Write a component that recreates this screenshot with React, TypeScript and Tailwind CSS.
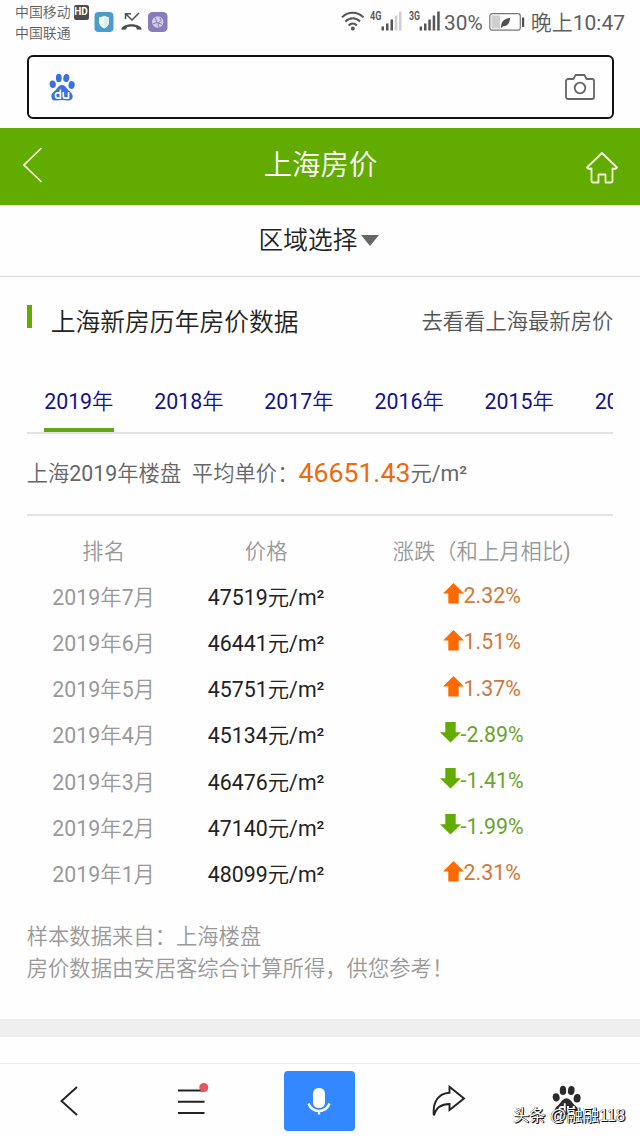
import React from "react";

type Row = { month: string; price: string; change: string; up: boolean };

const rows: Row[] = [
  { month: "2019年7月", price: "47519元/m²", change: "2.32%", up: true },
  { month: "2019年6月", price: "46441元/m²", change: "1.51%", up: true },
  { month: "2019年5月", price: "45751元/m²", change: "1.37%", up: true },
  { month: "2019年4月", price: "45134元/m²", change: "-2.89%", up: false },
  { month: "2019年3月", price: "46476元/m²", change: "-1.41%", up: false },
  { month: "2019年2月", price: "47140元/m²", change: "-1.99%", up: false },
  { month: "2019年1月", price: "48099元/m²", change: "2.31%", up: true },
];

const years = ["2019年", "2018年", "2017年", "2016年", "2015年", "2014年"];

function Paw({ className, cut }: { className: string; cut: string }) {
  return (
    <svg className={className} viewBox="0 0 26 28" fill="currentColor">
      <ellipse cx="3.7" cy="11.2" rx="3.1" ry="3.8" transform="rotate(-12 3.7 11.2)" />
      <ellipse cx="9.8" cy="4.9" rx="2.9" ry="4.2" />
      <ellipse cx="17.3" cy="5" rx="3" ry="4.1" transform="rotate(8 17.3 5)" />
      <ellipse cx="22.6" cy="12" rx="3.1" ry="3.9" transform="rotate(8 22.6 12)" />
      <path d="M13 12c2.6 0 3.8 2 5.400 4 2 2.500 5.300 4.200 5.300 7.500 0 3.200-2.400 4.300-5.200 4-2-.2-3.600-.5-5.500-.5s-3.600.4-5.500.5c-3 .2-5.200-1-5.200-4.100 0-3.200 3.200-4.900 5.200-7.400C9.100 14 10.400 12 13 12z" />
      <g fill="none" stroke={cut} strokeWidth="1.7">
        <path d="M11.400 16.500v9.300M11.400 19.900H8.600c-1.400 0-2.100.9-2.100 2.700s.7 2.600 2.100 2.600h2.800" />
        <path d="M14.300 19v4.200c0 1.400.7 2 2 2h3.200V19" />
      </g>
    </svg>
  );
}

function StatusBar() {
  return (
    <header className="flex h-[55px] items-start text-[#5d5d5d]">
      <div className="ml-[15px] mt-[2px] text-[13.9px] leading-[20.5px]">
        <div className="flex items-center">
          中国移动
          <span className="ml-[3px] flex h-[15px] w-[15px] items-center justify-center rounded-[2px] bg-[#4d4d4d] font-[Roboto] text-[10px] font-bold text-white">
            HD
          </span>
        </div>
        <div>中国联通</div>
      </div>
      <svg className="ml-[5px] mt-[11px] h-[22px] w-[74px]" viewBox="0 0 74 22">
        <rect x="0.500" y="1" width="19" height="20" rx="4" fill="#4b9cc9" />
        <path d="M10 5l5 1.500v4.500c0 3-2 5-5 6.500-3-1.500-5-3.500-5-6.500V6.500z" fill="#f4faf6" />
        <path d="M10 5l5 1.500v4.500c0 3-2 5-5 6.500z" fill="#dceff0" />
        <path d="M31.500 8V2.800h5.500M31.800 3l6.200 6L45 2" fill="none" stroke="#4f4f4f" strokeWidth="1.500" />
        <path d="M27.500 18.800c-.4-1.400.3-2.600 2-3.500 5-2.600 11-2.600 16 0 1.600.9 2.300 2.100 1.900 3.500l-4.500-.2-.9-2.300c-3-1-6-1-9 0l-.9 2.300z" fill="#4f4f4f" />
        <rect x="54" y="1" width="19.500" height="20" rx="4.500" fill="#8a7bbb" />
        <circle cx="63.700" cy="11" r="5.800" fill="#d0cbe6" />
        <path d="M61 6.500l2 5-4.500 1.500M63 11.500l5 2M66 6.500l1 3-3 3 1 4" stroke="#8577b8" strokeWidth="0.900" fill="none" />
      </svg>
      <div className="flex-1" />
      <svg className="mt-[8px] h-[26px] w-[102px]" viewBox="0 0 102 26">
        <g fill="none" stroke="#555" strokeWidth="2">
          <path d="M2 9.400c6-6.200 15.500-6.200 21.500 0M5.400 13.500c4.300-4.300 10.500-4.300 14.700 0M8.600 17.400c2.500-2.300 5.800-2.300 8.300 0" />
        </g>
        <circle cx="12.800" cy="20.500" r="1.900" fill="#555" />
        <g fill="#555" fontFamily="Roboto" fontSize="12" fontWeight="600">
          <text x="30" y="12" textLength="11.500" lengthAdjust="spacingAndGlyphs">4G</text>
          <text x="69" y="12" textLength="11" lengthAdjust="spacingAndGlyphs">3G</text>
        </g>
        <g fill="#555">
          <rect x="41.500" y="18.500" width="2.500" height="4" />
          <rect x="46" y="15.500" width="2.500" height="7" />
          <rect x="50.500" y="11.500" width="2.500" height="11" />
          <rect x="79.600" y="18.500" width="2.500" height="4" />
          <rect x="84" y="15.500" width="2.500" height="7" />
          <rect x="88.300" y="11.500" width="2.500" height="11" />
          <rect x="92.700" y="7.500" width="2.500" height="15" />
          <rect x="97.200" y="3.500" width="2.500" height="19" />
        </g>
        <g fill="#cfcfcf">
          <rect x="54.800" y="7.500" width="2.500" height="15" />
          <rect x="59" y="3.500" width="2.500" height="19" />
        </g>
      </svg>
      <span className="ml-[2px] mt-[10px] whitespace-nowrap text-[20.800px] leading-[27px]">30%</span>
      <svg className="ml-[6px] mt-[12px] h-[20px] w-[36px]" viewBox="0 0 36 20">
        <rect x="0.800" y="1.700" width="30.500" height="16.500" rx="2.500" fill="none" stroke="#777" strokeWidth="1.200" />
        <rect x="2.500" y="3.500" width="8.500" height="13" fill="#cfcfcf" />
        <path d="M12 15c0-5 3-8.500 9-9-.2 5.500-3 8.500-7 8.200L12.600 16z" fill="#4f4f4f" />
        <rect x="33" y="5.500" width="2.200" height="9.500" fill="#4f4f4f" />
      </svg>
      <span className="ml-[6px] mr-[15px] mt-[10px] whitespace-nowrap text-[21px] leading-[27px]">晚上10:47</span>
    </header>
  );
}

function Arrow({ up }: { up: boolean }) {
  return (
    <svg className="mt-[-5px] h-[21px] w-[21px] shrink-0" viewBox="0 0 21 21">
      {up ? (
        <path d="M10.500 0L21 10.500h-5.300V20.500H5.300V10.500H0z" fill="#ff6a00" />
      ) : (
        <path d="M10.500 20.500L0 10.300h5.300V0h10.400v10.300H21z" fill="#62ab00" />
      )}
    </svg>
  );
}

export default function App() {
  return (
    <div className="flex h-[1138px] w-[640px] flex-col overflow-hidden bg-[#fefefe] font-[Roboto,'Noto_Sans_CJK_SC_DemiLight','Noto_Sans_CJK_SC',sans-serif] text-[21.330px] text-[#333]">
      <StatusBar />
      <div className="mx-[26.500px] flex h-[64px] shrink-0 items-center justify-between rounded-[6px] border-2 border-[#111] pl-[20px] pr-[17px]">
        <Paw className="h-[28px] w-[26px] text-[#3c6fe0]" cut="#fff" />
        <svg className="h-[28px] w-[30px]" viewBox="0 0 30 28" fill="none" stroke="#666" strokeWidth="1.800">
          <path d="M3 6h5.500l2-4h9l2 4H27a2 2 0 0 1 2 2v16a2 2 0 0 1-2 2H3a2 2 0 0 1-2-2V8a2 2 0 0 1 2-2z" strokeLinejoin="round" />
          <circle cx="15" cy="15" r="5.300" />
        </svg>
      </div>

      <div className="mt-[9px] flex h-[77px] shrink-0 items-center justify-between bg-[#62ab00] pl-[23px] pr-[22px] text-white">
        <svg className="mb-[3px] h-[36px] w-[32px]" viewBox="0 0 32 36" fill="none" stroke="#f4fbdc" strokeWidth="1.700">
          <path d="M18.500 1L1 18l17.500 17" />
        </svg>
        <h1 className="pb-[1px] text-[28.400px] font-[350] leading-[40px]">上海房价</h1>
        <svg className="mt-[2px] h-[32px] w-[32px]" viewBox="0 0 32 32" fill="none" stroke="#f4fbdc" strokeWidth="1.800" strokeLinejoin="round">
          <path d="M16 1L1 15.500l1.500 1.300 3-.3V29a1.500 1.500 0 0 0 1.500 1.500h5.500v-8h7v8H25a1.500 1.500 0 0 0 1.500-1.500V16.500l3 .3 1.500-1.300z" />
        </svg>
      </div>

      <div className="flex h-[72px] shrink-0 items-center justify-center border-b border-[#d8d8d8] pr-[2px] text-[24.700px] font-[350] leading-[36px] text-[#222]">
        <span>区域选择</span>
        <svg className="ml-[4px] h-[11px] w-[18px]" viewBox="0 0 18 11">
          <path d="M0 0h18L9 11z" fill="#666" />
        </svg>
      </div>

      <main className="px-[26.670px]">
        <div className="flex h-[90px] items-center font-[350]">
          <span className="mb-[11px] h-[23px] w-[5px] bg-[#62ab00]" />
          <h2 className="ml-[19px] mt-[2px] text-[24.800px] leading-[36px] text-[#222]">上海新房历年房价数据</h2>
          <a className="ml-auto text-[#555]">去看看上海最新房价</a>
        </div>

        <nav className="flex h-[67px] gap-[40.500px] overflow-hidden border-b-2 border-[#e4e4e4] pl-[17.500px]">
          {years.map((y, i) => (
            <a
              key={y}
              className={
                "h-full w-[69.600px] shrink-0 whitespace-nowrap pt-[19px] leading-[32px] text-[#12128c] " +
                (i === 0 ? "border-b-4 border-[#62a516]" : "")
              }
            >
              {y}
            </a>
          ))}
        </nav>

        <div className="flex h-[82px] items-center border-b-2 border-[#e4e4e4] leading-[32px] text-[#666]">
          <span className="whitespace-pre">上海2019年楼盘&nbsp; 平均单价：</span>
          <span className="mb-[2px] text-[26.670px] text-[#ee6a0c]">46651.43</span>
          <span>元/m²</span>
        </div>

        <div className="grid grid-cols-[154px_171px_260px] pt-[12.500px] text-center leading-[46.200px] text-[#999]">
          <div>排名</div>
          <div>价格</div>
          <div className="whitespace-nowrap">涨跌（和上月相比)</div>
          {rows.map((r) => (
            <React.Fragment key={r.month}>
              <div>{r.month}</div>
              <div className="text-[#222]">{r.price}</div>
              <div className={"flex h-[46.200px] items-center justify-center pb-[3px] " + (r.up ? "text-[#d07838]" : "text-[#6ba32e]")}>
                <Arrow up={r.up} />
                <span>{r.change}</span>
              </div>
            </React.Fragment>
          ))}
        </div>

        <div className="pt-[23px] leading-[32px] text-[#999]">
          <p>样本数据来自：上海楼盘</p>
          <p>房价数据由安居客综合计算所得，供您参考！</p>
        </div>
      </main>

      <div className="mt-auto h-[18px] shrink-0 bg-[#efefef]" />
      <footer className="relative mt-[26px] flex h-[75px] shrink-0 border-t border-[#e8eaec]">
        <div className="flex flex-1 items-center pl-[60px]">
          <svg className="h-[30px] w-[18px]" viewBox="0 0 18 30" fill="none" stroke="#222" strokeWidth="1.900">
            <path d="M17 1L1.500 15 17 29" />
          </svg>
          <svg className="mb-[4px] ml-[99px] h-[38px] w-[34px]" viewBox="0 0 34 38">
            <path d="M1 10.500h26.500M1 21.700h26.500M1 33h26.500" stroke="#222" strokeWidth="1.900" />
            <circle cx="26.800" cy="7.500" r="4.500" fill="#e5565a" />
          </svg>
        </div>
        <div className="mt-[7px] flex h-[60px] w-[71px] items-center justify-center rounded-[4px] bg-[#3388ff]">
          <svg className="mr-[1px] h-[30px] w-[26px]" viewBox="0 0 26 30">
            <rect x="7" y="2" width="12" height="20" rx="5.500" fill="#fff" />
            <path d="M2.500 17.500c2 5 5.500 7.500 10.500 7.500s8.500-2.500 10.500-7.500M13 25v3.500" fill="none" stroke="#fff" strokeWidth="2.400" />
          </svg>
        </div>
        <div className="flex w-[285px] items-start pl-[77px] pt-[21px]">
          <svg className="h-[33px] w-[34px]" viewBox="0 0 34 33" fill="none" stroke="#222" strokeWidth="1.900" strokeLinejoin="miter">
            <path d="M17.500 1.800L32 13.500 17.500 25v-6C9 19 4 22.500 1.800 30.500 .5 17.500 6 8.500 17.500 7.800z" />
          </svg>
          <Paw className="ml-[86px] h-[31px] w-[29px] text-[#2b2b2b]" cut="#fff" />
        </div>
        <span className="absolute left-[513px] top-[38px] whitespace-nowrap font-['Liberation_Sans','Noto_Sans_CJK_SC',sans-serif] text-[16.300px] leading-[26px] text-[#fff] [text-shadow:1px_1px_0_#111,1px_0_0_#222,-0.500px_0_0_#555]">
          头条 @融融118
        </span>
      </footer>
    </div>
  );
}
